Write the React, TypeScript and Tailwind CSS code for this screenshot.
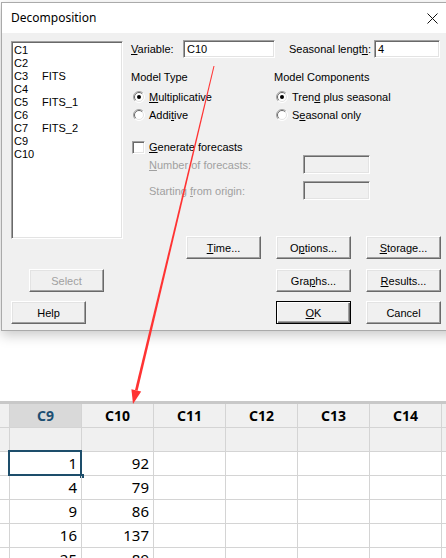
import type { ReactNode } from "react";

// classic win32 control look
const sunken =
  "border border-t-[#a0a0a0] border-l-[#a0a0a0] border-r-white border-b-white shadow-[inset_1px_1px_0_#696969,inset_-1px_-1px_0_#e3e3e3]";

function Btn({
  children,
  disabled,
  isDefault,
  className = "",
}: {
  children: ReactNode;
  disabled?: boolean;
  isDefault?: boolean;
  className?: string;
}) {
  const edge = isDefault
    ? "border border-black shadow-[inset_1px_1px_0_#fff,inset_-1px_-1px_0_#696969,inset_-2px_-2px_0_#a0a0a0]"
    : "border border-t-white border-l-white border-r-[#696969] border-b-[#696969] shadow-[inset_-1px_-1px_0_#a0a0a0,inset_1px_1px_0_#e3e3e3]";
  return (
    <div
      className={`flex h-[23px] w-[75px] shrink-0 items-center justify-center bg-[#f0f0f0] ${edge} ${
        disabled ? "text-[#a0a0a0]" : "text-black"
      } ${className}`}
    >
      {children}
    </div>
  );
}

function Radio({ checked }: { checked?: boolean }) {
  return (
    <svg width="12" height="12" viewBox="0 0 12 12" className="ml-[2px] shrink-0">
      <circle cx="6" cy="6" r="5.5" fill="#fff" />
      <path d="M2.1 9.9 A5.5 5.5 0 0 1 9.9 2.1" stroke="#a0a0a0" fill="none" />
      <path d="M9.9 2.1 A5.5 5.5 0 0 1 2.1 9.9" stroke="#ffffff" fill="none" />
      <path d="M2.8 9.2 A4.5 4.5 0 0 1 9.2 2.8" stroke="#696969" fill="none" />
      <path d="M9.2 2.8 A4.5 4.5 0 0 1 2.8 9.2" stroke="#e3e3e3" fill="none" />
      {checked && <circle cx="6" cy="6" r="2" fill="#000" />}
    </svg>
  );
}

const columns = [
  ["C1", ""],
  ["C2", ""],
  ["C3", "FITS"],
  ["C4", ""],
  ["C5", "FITS_1"],
  ["C6", ""],
  ["C7", "FITS_2"],
  ["C9", ""],
  ["C10", ""],
];

const rows = [
  [1, 92],
  [4, 79],
  [9, 86],
  [16, 137],
  [25, 89],
];

const sheetCols = ["C9", "C10", "C11", "C12", "C13", "C14"];

export default function App() {
  return (
    <div className="relative h-[558px] w-[446px] overflow-hidden bg-white">
      {/* Dialog */}
      <div className="ml-[1px] mt-[2px] w-[460px] border border-[#aaaaaa] shadow-[0_4px_12px_rgba(0,0,0,0.22)] font-['Liberation_Sans',Arial,sans-serif] text-[11px] leading-[14px] text-black">
        <div className="flex h-[30px] items-center justify-between bg-white pl-[9px] pr-[22px]">
          <span className="font-['Noto_Sans',sans-serif] text-[12px]">Decomposition</span>
          <svg width="11" height="11" viewBox="0 0 11 11">
            <path d="M0.5 0.5 L10.5 10.5 M10.5 0.5 L0.5 10.5" stroke="#111" strokeWidth="1" />
          </svg>
        </div>

        <div className="bg-[#f0f0f0] pb-[6px] pl-[9px]">
          <div className="flex items-start">
            {/* column list */}
            <div className={`mt-[8px] h-[198px] w-[112px] bg-white pl-[2px] pt-[2px] leading-[13px] ${sunken}`}>
              {columns.map(([c, name]) => (
                <div key={c} className="flex h-[13px]">
                  <span className="w-[28px]">{c}</span>
                  <span>{name}</span>
                </div>
              ))}
            </div>

            {/* fields */}
            <div className="ml-[8px] flex flex-col">
              <div className="mt-[7px] flex h-[18px] items-center">
                <span className="w-[52px]">
                  <span className="underline">V</span>ariable:
                </span>
                <div className={`flex h-[18px] w-[92px] items-center bg-white pl-[3px] ${sunken}`}>C10</div>
                <span className="ml-[14px] w-[85px]">
                  Seasonal lengt<span className="underline">h</span>:
                </span>
                <div className={`flex h-[18px] w-[66px] items-center bg-white pl-[3px] ${sunken}`}>4</div>
              </div>

              <div className="mt-[12px] flex">
                <div className="w-[143px]">
                  <div className="h-[14px]">Model Type</div>
                  <div className="mt-[4px] flex h-[18px] items-center">
                    <Radio checked />
                    <span className="ml-[4px]">
                      <span className="underline">M</span>ultiplicative
                    </span>
                  </div>
                  <div className="flex h-[18px] items-center">
                    <Radio />
                    <span className="ml-[4px]">
                      Addi<span className="underline">t</span>ive
                    </span>
                  </div>
                </div>
                <div>
                  <div className="h-[14px]">Model Components</div>
                  <div className="mt-[4px] flex h-[18px] items-center">
                    <Radio checked />
                    <span className="ml-[4px]">
                      Tren<span className="underline">d</span> plus seasonal
                    </span>
                  </div>
                  <div className="flex h-[18px] items-center">
                    <Radio />
                    <span className="ml-[4px]">
                      S<span className="underline">e</span>asonal only
                    </span>
                  </div>
                </div>
              </div>

              <div className="mt-[15px] flex h-[16px] items-center">
                <div className="ml-[1px] h-[13px] w-[13px] bg-white border border-t-[#a0a0a0] border-l-[#a0a0a0] border-r-white border-b-white shadow-[inset_1px_1px_0_#696969,inset_-1px_-1px_0_#e3e3e3]" />
                <span className="ml-[4px]">
                  <span className="underline">G</span>enerate forecasts
                </span>
              </div>
              <div className="flex h-[19px] items-center pl-[18px] text-[#a0a0a0]">
                <span className="w-[154px]">
                  <span className="underline">N</span>umber of forecasts:
                </span>
                <div className={`h-[19px] w-[67px] bg-[#f0f0f0] ${sunken}`} />
              </div>
              <div className="mt-[7px] flex h-[19px] items-center pl-[18px] text-[#a0a0a0]">
                <span className="w-[154px]">
                  Starting <span className="underline">f</span>rom origin:
                </span>
                <div className={`h-[19px] w-[67px] bg-[#f0f0f0] ${sunken}`} />
              </div>

              <div className="ml-[55px] mt-[36px] flex gap-[15px]">
                <Btn>
                  <span className="underline">T</span>ime...
                </Btn>
                <Btn>
                  O<span className="underline">p</span>tions...
                </Btn>
                <Btn>
                  <span className="underline">S</span>torage...
                </Btn>
              </div>
            </div>
          </div>

          <div className="mt-[10px] flex">
            <Btn disabled className="ml-[18px]">
              Select
            </Btn>
            <Btn className="ml-[172px]">
              Gra<span className="underline">p</span>hs...
            </Btn>
            <Btn className="ml-[15px]">
              <span className="underline">R</span>esults...
            </Btn>
          </div>

          <div className="mt-[9px] flex">
            <Btn>Help</Btn>
            <Btn isDefault className="ml-[190px]">
              <span className="underline">O</span>K
            </Btn>
            <Btn className="ml-[15px]">Cancel</Btn>
          </div>
        </div>
      </div>

      {/* Worksheet */}
      <div className="mt-[70px] border-t-[3px] border-[#c8c8c8] font-['Noto_Sans',sans-serif] text-black">
        <div className="flex h-[24px] border-b border-[#d4d4d4] bg-[#f0f0f0] text-[14px] font-bold">
          <div className="w-[10px] shrink-0 border-r border-[#d4d4d4]" />
          {sheetCols.map((c, i) => (
            <div
              key={c}
              className={`flex w-[72px] shrink-0 items-center justify-center border-r border-[#d4d4d4] ${
                i === 0 ? "bg-[#d9d9d9] text-[#1d4f73]" : ""
              }`}
            >
              {c}
            </div>
          ))}
          <div className="flex-1" />
        </div>
        <div className="flex h-[24px] border-b border-[#d4d4d4] bg-[#f0f0f0]">
          <div className="w-[10px] shrink-0 border-r border-[#d4d4d4]" />
          {sheetCols.map((c) => (
            <div key={c} className="w-[72px] shrink-0 border-r border-[#d4d4d4]" />
          ))}
        </div>
        {rows.map((r, ri) => (
          <div key={ri} className="flex h-[24px] border-b border-[#d4d4d4] text-[15px]">
            <div className="w-[10px] shrink-0 border-r border-[#d4d4d4]" />
            {sheetCols.map((c, ci) => (
              <div
                key={c}
                className="relative flex w-[72px] shrink-0 items-center justify-end border-r border-[#d4d4d4] pr-[4px]"
              >
                {ci < 2 ? r[ci] : ""}
                {ri === 0 && ci === 0 && (
                  <>
                    <div className="absolute -left-[2px] -top-[2px] bottom-[-1px] right-[-1px] border-2 border-[#1d4e6b]" />
                    <div className="absolute bottom-[-3px] right-[-3px] h-[4px] w-[4px] bg-[#1d4e6b]" />
                  </>
                )}
              </div>
            ))}
          </div>
        ))}
      </div>

      {/* red annotation arrow */}
      <svg className="pointer-events-none absolute left-0 top-0" width="446" height="558" viewBox="0 0 446 558">
        <polygon
          points="214.5,66.1 213.5,65.9 135.0,390.1 137.6,390.7"
          fill="#ff3333"
        />
        <polygon points="141.2,391.6 131.4,389.2 133,404" fill="#ff3333" />
      </svg>
    </div>
  );
}
